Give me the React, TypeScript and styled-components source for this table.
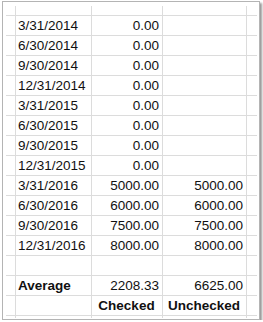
import styled, { createGlobalStyle } from 'styled-components'

type Align = 'left' | 'right' | 'center'

interface ICell {
  text: string
  align?: Align
  bold?: boolean
}

const GlobalStyle = createGlobalStyle`
  html, body {
    margin: 0;
    padding: 0;
    background: #ffffff;
  }

  body {
    font-family: "Liberation Sans", Arial, sans-serif;
  }
`

const dates = [
  '3/31/2014',
  '6/30/2014',
  '9/30/2014',
  '12/31/2014',
  '3/31/2015',
  '6/30/2015',
  '9/30/2015',
  '12/31/2015',
  '3/31/2016',
  '6/30/2016',
  '9/30/2016',
  '12/31/2016',
]

const checked = ['0.00', '0.00', '0.00', '0.00', '0.00', '0.00', '0.00', '0.00', '5000.00', '6000.00', '7500.00', '8000.00']
const unchecked = ['', '', '', '', '', '', '', '', '5000.00', '6000.00', '7500.00', '8000.00']

const rows: ICell[][] = [
  ...dates.map((date, i) => [
    { text: date },
    { text: checked[i], align: 'right' as Align },
    { text: unchecked[i], align: 'right' as Align },
  ]),
  [{ text: '' }, { text: '' }, { text: '' }],
  [
    { text: 'Average', bold: true },
    { text: '2208.33', align: 'right' },
    { text: '6625.00', align: 'right' },
  ],
  [
    { text: '' },
    { text: 'Checked', align: 'center', bold: true },
    { text: 'Unchecked', align: 'center', bold: true },
  ],
]

export default function App() {
  return (
    <>
      <GlobalStyle />
      <Frame>
        <Sheet>
          {/* cropped top row */}
          <Edge />
          <Edge />
          <Edge />
          <Edge />
          <Edge />
          {rows.map((row, r) => (
            <Row key={r} row={row} />
          ))}
          {/* cropped bottom row */}
          <Edge />
          <Edge />
          <Edge />
          <Edge />
          <Edge />
        </Sheet>
      </Frame>
    </>
  )
}

function Row({ row }: { row: ICell[] }) {
  return (
    <>
      <Edge />
      {row.map((cell, c) => (
        <Cell key={c} $align={cell.align ?? 'left'} $bold={!!cell.bold}>
          {cell.text}
        </Cell>
      ))}
      <Edge />
    </>
  )
}

const Frame = styled.div`
  background: #ffffff;
  border: 1px solid #b4b4b4;
  box-shadow: 2px 2px 2px rgba(0, 0, 0, 0.4);
  box-sizing: border-box;
  margin: 1px 0 0 2px;
  padding: 4px 2px 1px 3px;
  width: fit-content;
`

const Sheet = styled.div`
  background: #dcdcdc;
  display: grid;
  gap: 1px;
  grid-template-columns: 9px 75px 70px 83px 10px;
  grid-template-rows: 9px repeat(15, 19px) 2px;
`

const Edge = styled.div`
  background: #ffffff;
`

const Cell = styled.div<{ $align: Align; $bold: boolean }>`
  align-items: center;
  background: #ffffff;
  color: #111111;
  display: flex;
  font-size: 13.5px;
  font-weight: ${({ $bold }) => ($bold ? 700 : 400)};
  justify-content: ${({ $align }) =>
    $align === 'right' ? 'flex-end' : $align === 'center' ? 'center' : 'flex-start'};
  line-height: 1;
  padding: 1px 3px 0 2px;
  white-space: nowrap;
`
